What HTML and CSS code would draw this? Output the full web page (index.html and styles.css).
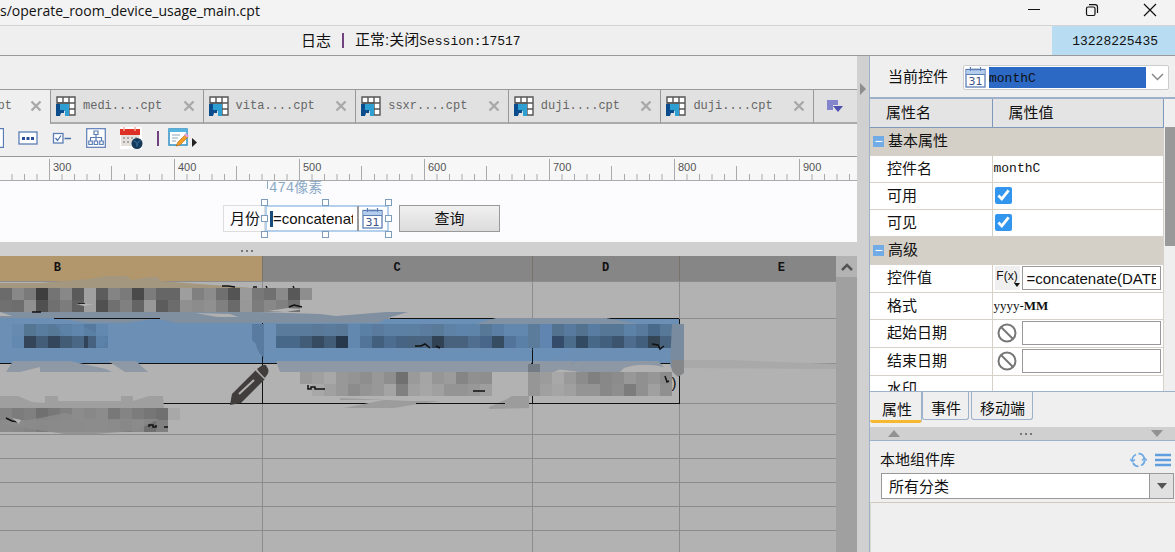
FILE: index.html
```html
<!DOCTYPE html>
<html lang="zh-CN">
<head>
<meta charset="utf-8">
<title>operate_room_device_usage_main.cpt</title>
<link rel="stylesheet" href="styles.css">
</head>
<body>
<svg class="defs" width="0" height="0" aria-hidden="true">
  <symbol id="i-cpt" viewBox="0 0 20 20">
    <path d="M1 1h18v18H12V7H1z" fill="#fff" stroke="#555" stroke-width="1.4"/>
    <path d="M1 7h18M7 1v6M13 1v18M13 13h6" stroke="#555" stroke-width="1.4" fill="none"/>
    <path d="M0 8h13v12H9v-5H5l-5 5z" fill="#2d9fd3"/>
    <path d="M0 8h4v6h4v3H5l-1 3H0z" fill="#0a4c8c"/>
  </symbol>
  <symbol id="i-x" viewBox="0 0 12 12"><path d="M1.500 1.500l9 9M10.500 1.500l-9 9" stroke="#a9a9a9" stroke-width="2.400" fill="none"/></symbol>
  <symbol id="i-date" viewBox="0 0 21 21">
    <rect x="1" y="2.500" width="19" height="17.500" fill="#fff" stroke="#5b7fb5" stroke-width="1.300"/>
    <path d="M1.500 3h18v4.500h-18z" fill="#b4cdec"/><path d="M1 7.500h19" stroke="#5b7fb5"/>
    <path d="M5.500 0v4M15.500 0v4M7 2.500h7" stroke="#5b7fb5" stroke-width="1.300"/>
    <text x="10.500" y="18" text-anchor="middle" class="date-num">31</text>
  </symbol>
  <symbol id="i-no" viewBox="0 0 20 20"><circle cx="10" cy="10" r="8.500" fill="none" stroke="#777" stroke-width="2"/><path d="M4 4l12 12" stroke="#777" stroke-width="2"/></symbol>
</svg>

<header class="titlebar">
  <span class="title">s/operate_room_device_usage_main.cpt</span>
  <div class="win-buttons">
    <button aria-label="最小化"><svg width="14" height="14"><path d="M1 6.500h12" stroke="#111"/></svg></button>
    <button aria-label="还原"><svg width="14" height="14" fill="none" stroke="#111" stroke-width="1.200"><rect x="1.500" y="4" width="8.500" height="8.500" rx="1.500"/><path d="M4 1.600h6q2.500 0 2.500 2.500V10"/></svg></button>
    <button aria-label="关闭"><svg width="14" height="14"><path d="M1 1l12 12M13 1L1 13" stroke="#111" stroke-width="1.200"/></svg></button>
  </div>
</header>
<div class="statusbar">
  <div class="status"><span>日志</span><i class="bar"></i><span>正常:关闭<span class="mono dark">Session:17517</span></span></div>
  <div class="user mono">13228225435</div>
</div>

<div class="work">
  <main class="editor">
    <div class="gap"></div>
    <nav class="tabs">
      <div class="tab active"><span>pt</span><button aria-label="关闭"><svg width="12" height="12"><use href="#i-x"/></svg></button></div>
      <div class="tab"><svg width="20" height="20"><use href="#i-cpt"/></svg><span>medi....cpt</span><button aria-label="关闭"><svg width="12" height="12"><use href="#i-x"/></svg></button></div>
      <div class="tab"><svg width="20" height="20"><use href="#i-cpt"/></svg><span>vita....cpt</span><button aria-label="关闭"><svg width="12" height="12"><use href="#i-x"/></svg></button></div>
      <div class="tab"><svg width="20" height="20"><use href="#i-cpt"/></svg><span>ssxr....cpt</span><button aria-label="关闭"><svg width="12" height="12"><use href="#i-x"/></svg></button></div>
      <div class="tab"><svg width="20" height="20"><use href="#i-cpt"/></svg><span>duji....cpt</span><button aria-label="关闭"><svg width="12" height="12"><use href="#i-x"/></svg></button></div>
      <div class="tab"><svg width="20" height="20"><use href="#i-cpt"/></svg><span>duji....cpt</span><button aria-label="关闭"><svg width="12" height="12"><use href="#i-x"/></svg></button></div>
      <button class="more" aria-label="更多"><svg width="16" height="14"><path d="M0 1h11v5H6v5H0z" fill="#8485cb"/><path d="M6 7h10l-5 6z" fill="#4e4fae"/></svg></button>
    </nav>
    <div class="toolbar">
      <button aria-label="文本"><svg width="4" height="20"><path d="M0 .500h3.500v19H0" fill="#fff" stroke="#5b7db6" stroke-width="1.300"/></svg></button>
      <button aria-label="密码"><svg width="20" height="20"><rect x="1" y="4" width="18" height="12" fill="#fff" stroke="#5b7db6" stroke-width="1.300"/><path d="M4 9h3v3H4zM8.500 9h3v3h-3zM13 9h3v3h-3z" fill="#2d4f99"/></svg></button>
      <button aria-label="复选框"><svg width="20" height="20"><rect x="1.500" y="5.500" width="9.500" height="9.500" fill="#fff" stroke="#5b7db6" stroke-width="1.300"/><path d="M3.500 10l2 2.500 3.500-5M12.500 10.500H19" stroke="#4a70ac" stroke-width="1.300" fill="none"/></svg></button>
      <button aria-label="树"><svg width="20" height="20" fill="#fff" stroke="#5b7db6" stroke-width="1.200"><rect x=".700" y=".700" width="18.600" height="18.600"/><path d="M10 6v7M4.500 13v-3.500h11V13" fill="none"/><path d="M8 3h4v3.500H8zM2.800 13h3.500v3.500H2.800zM8.200 13h3.500v3.500H8.200zM13.700 13h3.500v3.500h-3.500z"/></svg></button>
      <button aria-label="日期"><svg width="23" height="22"><rect x="0" y="0" width="22" height="22" fill="#fff"/><path d="M1 8h18v11H1z" fill="#e4e0dc"/><path d="M3 10h2v2H3zM7 10h2v2H7zM11 10h2v2h-2zM15 10h2v2h-2zM3 14h2v2H3zM7 14h2v2H7z" fill="#a9a9a9"/><path d="M0 2h20v6H0z" fill="#df3025"/><path d="M4 0v4M15 0v4" stroke="#f4aaa0" stroke-width="1.500"/><circle cx="17" cy="16.500" r="5.500" fill="#163a5a"/><path d="M14 13.500l3 3 3-3M17 16.500v3" stroke="#3c81b2" fill="none"/></svg></button>
      <i class="bar"></i>
      <button aria-label="编辑"><svg width="29" height="20"><rect x="1" y="1" width="18" height="16" fill="#fff" stroke="#2f91c5" stroke-width="1.500"/><path d="M1 1h18v3H1z" fill="#56b4df"/><path d="M4 7h8M4 10h6M4 13h4" stroke="#8ba6b8"/><path d="M8 18l2-4 7-7 3 2-8 8z" fill="#f49c25" stroke="#a86714" stroke-width=".600"/><path d="M16 7l2-2 3 3-2 1.500z" fill="#db9fda"/><path d="M24 10l5 4.500-5 4.500z" fill="#222"/></svg></button>
    </div>
    <div class="ruler">
      <svg class="ticks" width="100%" height="24">
        <defs><pattern id="ticks" x="49" width="125" height="24" patternUnits="userSpaceOnUse">
          <path d="M.500 2v22" stroke="#aaa"/><path d="M62.500 9v15" stroke="#aaa"/>
          <path d="M13 17v7M25.500 17v7M38 17v7M50.500 17v7M75.500 17v7M88 17v7M100.500 17v7M113 17v7" stroke="#aaa"/>
        </pattern></defs><rect width="100%" height="24" fill="url(#ticks)"/>
      </svg>
      <span class="first"></span><span>300</span><span>400</span><span>500</span><span>600</span><span>700</span><span>800</span><span>900</span>
    </div>
    <div class="canvas">
      <span class="measure">474像素</span>
      <label class="w-label" for="month">月份</label>
      <div class="w-date">
        <i class="caret"></i><input id="month" type="text" value="=concatenate(DATE)"><button aria-label="选择日期"><svg width="21" height="21"><use href="#i-date"/></svg></button>
        <i class="h nw"></i><i class="h n"></i><i class="h ne"></i><i class="h w"></i><i class="h e"></i><i class="h sw"></i><i class="h s"></i><i class="h se"></i>
      </div>
      <button class="w-query">查询</button>
    </div>
    <div class="hsplit"><svg width="14" height="4"><path d="M1 1h2v2H1zM6 1h2v2H6zM11 1h2v2h-2z" fill="#777"/></svg></div>
    <div class="sheet">
      <div class="grid">
        <table>
          <colgroup><col class="cb"><col class="cc"><col class="cd"><col></colgroup>
          <thead><tr><th class="sel"><span class="b-name">B</span></th><th>C</th><th>D</th><th><span class="e-name">E</span></th></tr></thead>
          <tbody>
            <tr class="r1"><td></td><td></td><td></td><td></td></tr>
            <tr class="r2"><td></td><td></td><td></td><td></td></tr>
            <tr class="r3"><td></td><td></td><td class="end">)</td><td></td></tr>
            <tr class="r4"><td></td><td></td><td></td><td></td></tr>
            <tr><td></td><td></td><td></td><td></td></tr><tr><td></td><td></td><td></td><td></td></tr><tr><td></td><td></td><td></td><td></td></tr><tr><td></td><td></td><td></td><td></td></tr><tr><td></td><td></td><td></td><td></td></tr>
          </tbody>
        </table>
        <svg class="mosaic" width="836" height="296" viewBox="0 256 836 296" aria-hidden="true">
          <path d="M0 283h40l48-4 20-3h18l6 4 18-3h9v4l54 4 40 3H0z" fill="#a4977f"/>
          <path d="M0 312h258l62 2 16 2 50-4h22l-20 6-10 5H0v-7h12z" fill="#8090a1"/>
          <path d="M195 313l35 1 8 3-20 0z" fill="#b0b0b0"/>
          <path d="M0 318h55l40 6H0zM160 318h-5l25 6h-60z" fill="#6b8fb5"/>
          <path d="M54 318.500h106M390 318.500h106M607 318.500h72" stroke="#111"/>
          <path d="M378 323l12-4h105l-25 11-20-1-30 0z" fill="#6b90b8"/>
          <path d="M478 323l18-5h110l32 6v4H478z" fill="#8092a4"/>
          <g id="cells" shape-rendering="crispEdges"></g>
          <path d="M54 324l28 2 26 12-4 8-10 2h-6V336H66z" fill="#6288b0" opacity=".45"/>
          <path d="M252 324h12v34q-7-6-8-14l-4-4z" fill="#587b9f"/>
          <path d="M276 348h90l80 5 130-5-30 13H264z" fill="#6b90b8"/>
          <path d="M13 361h57l36 8 6 3H40v-5l-20 5H6zM108 361h28l12 11h-23zM276 361h255v11H280z" fill="#8f99a5"/>
          <path d="M532 361h44l-22 11h-22zM580 372l-24-3 22-8h80l6 6q-22-5-40 1l-4 4z" fill="#8e98a4"/>
          <path d="M528 364h12v8h-12z" fill="#737c84"/>
          <path d="M672 324h12v44l-6 8q-6-3-8-12z" fill="#788b9f"/><path d="M672 360h12v13l-6 4-6-6z" fill="#858789"/>
          <path d="M684 360h46l106 4v5l-152-1z" fill="#a9a9a9"/>
          <path d="M0 396h18l14 6 13 1v-7h13v5h63v-5h12v5l16-5h14l1 12H0z" fill="#9f9f9f"/>
          <path d="M340 398l70 3h30l-28 4-18 3h-50l40-8h-44zM489 407l18-8 5-3h17v12l-40 1z" fill="#9c9c9c"/>
          <path d="M0 424l35-5 30-6 28 6h66l-24 12-40 3H64z" fill="#8c8c8c" opacity=".8"/>
          <path d="M165 403.500h98M416 403.500h89M531 403.500h148M532.500 396v8M532.500 350v14M679.500 376v28M235 363.500h38" stroke="#111"/>
          <path d="M222 286h6l7 1m18 0h4m9-1 1 2m26-2 1 2M78 304h7m204 3 5-2 8 2M32 312h9M415 346h6l4-2 5 4m6-2 4 2M652 344l6 1 2 4 4-3M6 418l6 3 8 1M149 427v-2h4v2h3v-2m8 2h4M308 385v4h3v-2h4v2h10M665 376l2 6 2-1M473 391h12" fill="none" stroke="#111" stroke-width="1.500"/>
          <path d="M12 418l9 2-2 4zM76 304h18l-10 2zM268 311l20-3 16 1-18 3z" fill="#b4b4b4"/>
          <g><path d="M230 405l2-11 24-24 9 9-24 24z" fill="#403d3c"/><path d="M257 369l4-3q5-3 6 1 3 4 0 8l-3 4z" fill="#403d3c"/><path d="M256 370l9 9" stroke="#aaa" stroke-width="1.500"/><path d="M239 394l15-14" stroke="#b0b0b0" stroke-width="2"/></g>
        </svg>
      </div>
      <div class="vscroll"><button aria-label="向上"><svg width="12" height="8"><path d="M1 7l5-5 5 5" fill="none" stroke="#555" stroke-width="2.500"/></svg></button></div>
    </div>
  </main>

  <div class="vsplit"><svg width="8" height="12"><path d="M1 0l6 6-6 6z" fill="#8d8d8d"/></svg></div>

  <aside class="side">
    <div class="current">
      <label for="cur">当前控件</label>
      <div class="combo"><svg width="21" height="21"><use href="#i-date"/></svg><select id="cur" class="mono"><option>monthC</option></select><svg width="22" height="12"><path d="M6 3l5.500 5.500L17 3" fill="none" stroke="#888" stroke-width="1.500"/></svg></div>
    </div>
    <div class="props">
      <div class="props-view"><table>
        <colgroup><col class="cn"><col></colgroup>
        <thead><tr><th>属性名</th><th>属性值</th></tr></thead>
        <tbody>
          <tr class="group"><td colspan="2"><div><button aria-label="折叠">−</button>基本属性</div></td></tr>
          <tr><td>控件名</td><td class="mono">monthC</td></tr>
          <tr><td><label for="en">可用</label></td><td><input id="en" type="checkbox" checked></td></tr>
          <tr><td><label for="vi">可见</label></td><td><input id="vi" type="checkbox" checked></td></tr>
          <tr class="group"><td colspan="2"><div><button aria-label="折叠">−</button>高级</div></td></tr>
          <tr class="edit"><td><label for="val">控件值</label></td><td><div><button class="fx">F(x)<svg width="6" height="4"><path d="M0 0h6L3 4z" fill="#111"/></svg></button><input id="val" type="text" value="=concatenate(DATEINMONTH)"></div></td></tr>
          <tr><td>格式</td><td class="fmt">yyyy-<b>MM</b></td></tr>
          <tr class="edit"><td><label for="sd">起始日期</label></td><td><div><button class="no" aria-label="无"><svg width="20" height="20"><use href="#i-no"/></svg></button><input id="sd" type="text"></div></td></tr>
          <tr class="edit"><td><label for="ed">结束日期</label></td><td><div><button class="no" aria-label="无"><svg width="20" height="20"><use href="#i-no"/></svg></button><input id="ed" type="text"></div></td></tr>
          <tr><td>水印</td><td></td></tr>
        </tbody>
      </table></div>
      <div class="pscroll"><i></i></div>
    </div>
    <div class="ptabs"><button class="on">属性</button><button>事件</button><button class="apart">移动端</button></div>
    <div class="hsplit side-split"><svg width="12" height="7"><path d="M6 0l6 7H0z" fill="#929292"/></svg><svg width="14" height="4"><path d="M1 1h2v2H1zM6 1h2v2H6zM11 1h2v2h-2z" fill="#777"/></svg><svg width="12" height="7"><path d="M0 0h12L6 7z" fill="#929292"/></svg></div>
    <section class="library">
      <div class="lib-head"><label for="lib">本地组件库</label>
        <button aria-label="刷新"><svg width="17" height="16" fill="none" stroke="#6faae4" stroke-width="1.800"><path d="M2.500 9.500A6 6 0 0 1 6 2.500M8.500 1.700A6 6 0 0 1 14.300 6.500M14.500 7.500A6 6 0 0 1 11 13.500M8.500 14.300A6 6 0 0 1 3 11"/><path d="M0 7l2.500 2.500L5 7.500M12 8.500L14.500 6 17 8.500" stroke-width="1.500"/></svg></button>
        <button aria-label="菜单"><svg width="16" height="14"><path d="M0 2h16M0 7h16M0 12h16" stroke="#5f9fe0" stroke-width="2.300"/></svg></button>
      </div>
      <div class="lib-select"><select id="lib"><option>所有分类</option></select><span><svg width="10" height="6"><path d="M0 0h10L5 6z" fill="#555"/></svg></span></div>
      <div class="lib-body"></div>
    </section>
  </aside>
</div>
<script src="mosaic.js"></script>
</body>
</html>
```
FILE: styles.css
```css
* { box-sizing: border-box; }
body {
  margin: 0; height: 100vh; overflow: hidden;
  display: flex; flex-direction: column;
  background: #efefef; color: #111;
  font: 15px/20px "Liberation Sans", "Noto Sans CJK SC", sans-serif;
}
button { border: 0; padding: 0; background: none; color: inherit; font: inherit; display: flex; align-items: center; justify-content: center; }
select, input { font: inherit; color: inherit; border-radius: 0; margin: 0; min-width: 0; }
select { appearance: none; border: 0; padding: 0; outline: 0; }
svg { display: block; flex: none; }
table { border-collapse: collapse; table-layout: fixed; width: 100%; }
.defs { display: none; }
.date-num { font: 11px "DejaVu Sans", sans-serif; fill: #3c5484; }
.mono { font-family: "Liberation Mono", monospace; font-size: 13px; }
.dark { color: #111; }

.titlebar { height: 26px; flex: none; display: flex; align-items: center; justify-content: space-between; background: #f3f3f3; border-bottom: 1px solid #d4d4d4; }
.title { font: 14px/20px "Open Sans", sans-serif; margin-bottom: 4px; }
.win-buttons { display: flex; margin-bottom: 5px; padding-right: 18px; gap: 44px; }
.statusbar { height: 30px; flex: none; display: flex; justify-content: space-between; border-bottom: 1px solid #999; }
.status { display: flex; align-items: center; padding-left: 301px; gap: 11px; white-space: nowrap; }
.bar { width: 2px; height: 15px; background: #714180; }
.user { background: #b8dcf2; width: 123px; display: flex; align-items: center; justify-content: flex-end; padding: 2px 17px 0 0; }

.work { flex: 1; min-height: 0; display: flex; }
.editor { flex: 1; min-width: 0; display: flex; flex-direction: column; }
.gap { height: 33px; flex: none; }
.tabs { height: 35px; flex: none; display: flex; border-top: 1px solid #999; }
.tab { flex: 1; min-width: 0; display: flex; align-items: center; padding: 0 8px 0 5px; gap: 7px; background: #e1e1e1; border-left: 1px solid #999; border-bottom: 2px solid #aaa; font: 12px/20px "Liberation Mono", monospace; color: #666; }
.tab button { margin-left: auto; }
.tab.active { flex: 0 0 50px; padding: 0 8px 0 0; background: #efefef; border-left: 0; border-bottom-color: #efefef; }
.tab.active span { width: 12px; display: flex; justify-content: flex-end; }
.more { width: 44px; background: #e1e1e1; border-left: 1px solid #999; border-bottom: 2px solid #aaa; }
.toolbar { height: 32px; flex: none; display: flex; align-items: center; gap: 14px; padding-bottom: 4px; }
.toolbar .bar { margin-right: -5px; }
.ruler { height: 25px; flex: none; position: relative; display: flex; overflow: hidden; background: #f7f7f7; border-top: 1px solid #999; border-bottom: 1px solid #aaa; }
.ruler span { flex: none; width: 125px; padding-left: 4px; font: 11px/20px "Liberation Sans", sans-serif; color: #555; }
.ruler .first { width: 49px; }
.ticks { position: absolute; left: 0; top: 0; }

.canvas { height: 61px; flex: none; position: relative; background: #fcfcfe; }
.measure { position: absolute; left: 267px; top: 0; padding-left: 2px; font: 14px/14px "Liberation Mono", "Noto Sans CJK SC", monospace; color: #8aa9c6; background: linear-gradient(#8aa9c6, #8aa9c6) 0 0 / 1px 8px no-repeat; }
.w-label { position: absolute; left: 223px; top: 24px; width: 42px; height: 27px; border: 1px solid #ddd; padding-left: 6px; line-height: 26px; }
.w-date { position: absolute; left: 265px; top: 24px; width: 124px; height: 27px; border: 2px solid #b4d0ec; background: #fff; display: flex; align-items: center; }
.w-date input { flex: 1; border: 0; outline: 0; padding: 0; margin-right: 4px; height: 21px; background: none; font-size: 15px; }
.w-date button { height: 25px; width: 30px; padding-right: 2px; border-left: 2px solid #999; }
.caret { width: 3px; height: 16px; margin-left: 3px; background: #174c7c; }
.h { position: absolute; width: 7px; height: 7px; background: #fff; border: 1px solid #7c9cbc; }
.nw, .n, .ne { top: -8px; } .w, .e { top: 8px; } .sw, .s, .se { bottom: -8px; }
.nw, .w, .sw { left: -6px; } .n, .s { left: 55px; } .ne, .e, .se { right: -5px; }
.w-query { position: absolute; left: 399px; top: 24px; width: 101px; height: 27px; border: 1px solid #999; background: linear-gradient(#f0f0f0, #dcdcdc); }
.hsplit { height: 14px; flex: none; display: flex; align-items: center; padding-left: 240px; padding-top: 3px; background: #d0d0d0; }

.sheet { flex: 1; min-height: 0; display: flex; }
.grid { flex: 1; min-width: 0; position: relative; overflow: hidden; background: #b2b2b2; }
.grid td, .grid th { padding: 0; border-right: 1px solid #8c8c8c; border-bottom: 1px solid #8c8c8c; height: 24px; }
.grid tr > :last-child { border-right: 0; }
.grid th { height: 25px; background: #868686; font: bold 12px/20px "Liberation Mono", monospace; border-right-color: #77736a; }
.grid .sel { background: #b1976b; }
.b-name { padding-right: 147px; }
.e-name { padding-left: 47px; }
.cb { width: 262px; } .cc { width: 270px; } .cd { width: 147px; }
.grid .r1 td { height: 37px; }
.grid .r2 td { height: 45px; }
.grid .r2 td:not(:last-child) { background: #6b8fb5; border-color: #111; }
.grid .r3 td { height: 40px; }
.grid .r3 td:not(:last-child) { border-color: #111; }
.grid .r4 td { height: 31px; }
.grid .end { text-align: right; padding-right: 2px; }
.mosaic { position: absolute; left: 0; top: 0; }
.vscroll { width: 21px; background: #a0a0a0; }
.vscroll button { width: 21px; height: 21px; background: #b3b3b3; }
.vsplit { width: 12px; flex: none; background: #d0d0d0; padding: 27px 0 0 2px; }

.side { width: 306px; flex: none; display: flex; flex-direction: column; border-left: 1px solid #9eb0ca; }
.current { height: 41px; flex: none; display: flex; align-items: center; gap: 15px; padding: 1px 6px 0 18px; }
.combo { flex: 1; height: 25px; display: flex; align-items: center; border: 1px solid #ccc; background: #fff; border-radius: 2px; padding-left: 1px; }
.combo select { flex: 1; height: 21px; margin-left: 3px; padding-top: 2px; background: #2b69c5; }
.props { height: 295px; flex: none; display: flex; border-top: 2px solid #9eb0ca; border-bottom: 1px solid #9eb0ca; }
.props-view { flex: 1; min-width: 0; overflow: hidden; background: #fff; }
.cn { width: 122px; }
.props th { height: 28px; padding: 0 14px 0 16px; text-align: left; font-weight: normal; background: #e4e4e4; border-right: 1px solid #7d9aba; border-bottom: 1px solid #7d9aba; }
.props td { height: 27px; padding: 0 0 0 17px; border-right: 1px solid #d5d1c9; border-bottom: 1px solid #d5d1c9; line-height: 20px; }
.props td + td { padding: 0 2px 0 1px; }
.props .group td { height: 28px; background: #d4d0c8; padding: 0 3px; }
.group div { display: flex; align-items: center; gap: 4px; }
.group button { width: 11px; height: 11px; background: #72ace6; color: #fff; line-height: 10px; font-size: 14px; }
.props .edit td { height: 28px; }
.edit div { display: flex; align-items: center; gap: 2px; padding-left: 1px; }
.edit input { flex: 1; height: 24px; border: 1px solid #999; padding: 0 4px; font-size: 15px; background: #fff; }
.props .fx { width: 25px; height: 24px; flex-direction: column; background: #efefef; font-size: 12px; line-height: 14px; }
.fx svg { align-self: flex-end; }
.props .no { width: 25px; }
.fmt { font: 13px/20px "Liberation Serif", serif; }
.props input[type=checkbox] { display: block; width: 17px; height: 17px; margin-left: 1px; accent-color: #3296ef; }
.pscroll { width: 11px; padding: 28px 0 0 1px; }
.pscroll i { display: block; height: 119px; background: #999; }
.ptabs { height: 35px; flex: none; display: flex; align-items: flex-start; }
.ptabs button { height: 28px; padding: 6px 7px 0 8px; border: 1px solid #9eb0ca; border-top: 0; border-radius: 0 0 3px 3px; }
.ptabs .on { height: 31px; padding: 8px 9px 0 12px; border-bottom: 3px solid #f5b82e; border-left: 0; }
.ptabs .apart { margin-left: 2px; }
.side-split { padding: 0 12px 0 18px; justify-content: space-between; border-bottom: 1px solid #9eb0ca; }
.library { flex: 1; min-height: 0; display: flex; flex-direction: column; }
.lib-head { height: 32px; display: flex; align-items: center; gap: 8px; padding: 5px 4px 0 10px; }
.lib-head label { flex: 1; }
.lib-select { height: 26px; margin: 0 1px 3px 11px; display: flex; border: 1px solid #999; background: #fff; }
.lib-select select { flex: 1; padding: 2px 0 0 7px; background: #fff; }
.lib-select span { width: 24px; display: flex; align-items: center; justify-content: center; background: #e1e1e1; border-left: 1px solid #999; }
.lib-body { flex: 1; border-top: 1px solid #cfcbbd; border-left: 1px solid #dad7cd; }
```
FILE: mosaic.js
```js
// Blurred cells of the report: start x, start y, colours of consecutive 12px squares.
const rows = [
  [0, 288, "6b6b6b 888888 7a7a7a 3e3e3e 747474 888888 5a5a5a a0a0a0 5c5c5c 848484 7a7a7a 4a4a4a 7c7c7c 666666 666666 9e9e9e 808080 8c8c8c 707070 545454 9a9a9a 787878 707070 8a8a8a 585858 8e8e8e"],
  [0, 300, "707070 6e6e6e 909090 505050 707070 7c7c7c 606060 a0a0a0 505050 707070 808080 646464 989898 5c5c5c 6c6c6c 909090 8c8c8c 909090 808080 6a6a6a 989898 7c7c7c 888888 808080 707070"],
  [12, 324, "668ab0 557692 587d9f 567998 597fa3 6085ab 567a9f 6489b1"],
  [12, 336, "6489b0 34455a 435d78 34465c 435c76 4a6885 32445a 597ea4"],
  [276, 324, "5b7b9d 5b7b9d 5b7b9c 5a7998 5b7b9d 5a7898 6388b0 5b80a6 5a7a9e 5b80a4 5c80a4 5c80a2 5b7c9e 5a7a9a 5e82a6 5f84ac 5f84aa 587898 5c7fa5 6388b0 6388b0 5c7c9c 5f85b0 527290 587a9e 527290 587ca2 567896 567896 5c82a8 587a9c 4a6a8c 587898"],
  [276, 336, "48688a 48688a 425c78 364a60 425c78 28384c 6388b0 527498 42607e 4c6c90 486484 48647e 486480 304254 48627e 48627e 506e90 48658a 364c60 52739a 5a80a8 5c7c9c 5f85b0 344c6a 4c6c8c 324a62 486888 42607e 3c546e 4e6c8e 42607e 344656 486480"],
  [300, 372, "9a9a9a a0a0a0 a8a8a8 989898 949494 8e8e8e 989898 8e8e8e 707070 9a9a9a a5a5a5 969696 9c9c9c 858585 909090 8e8e8e"],
  [312, 384, "a8a8a8 a0a0a0 989898 8c8c8c 949494 989898 a4a4a4 808080 a0a0a0 a6a6a6 a0a0a0 949494 949494 989898 9e9e9e"],
  [528, 372, "969696 9c9c9c a8a8a8 9a9a9a 8c8c8c 808080 888888 8c8c8c 989898 909090 969696 8c8c8c"],
  [528, 384, "969696 a0a0a0 a5a5a5 a0a0a0 949494 949494 888888 8e8e8e 7c7c7c 909090 a0a0a0 909090"],
  [0, 408, "848484 7c7c7c 808080 707070 787878 808080 8c8c8c 888888 8c8c8c 787878 848484 7c7c7c 767676 707070 a8a8a8"],
  [0, 420, "8a8a8a 888888 848484 7c7c7c 848484 888888 888888 8e8e8e 8c8c8c 888888 787878 888888 707070 808080"]
];
const cells = document.getElementById("cells");
for (const [x, y, colours] of rows) {
  colours.split(" ").forEach((c, i) => {
    const r = document.createElementNS("http://www.w3.org/2000/svg", "rect");
    r.setAttribute("x", x + i * 12);
    r.setAttribute("y", y);
    r.setAttribute("width", 12);
    r.setAttribute("height", 12);
    r.setAttribute("fill", "#" + c);
    cells.appendChild(r);
  });
}
```
